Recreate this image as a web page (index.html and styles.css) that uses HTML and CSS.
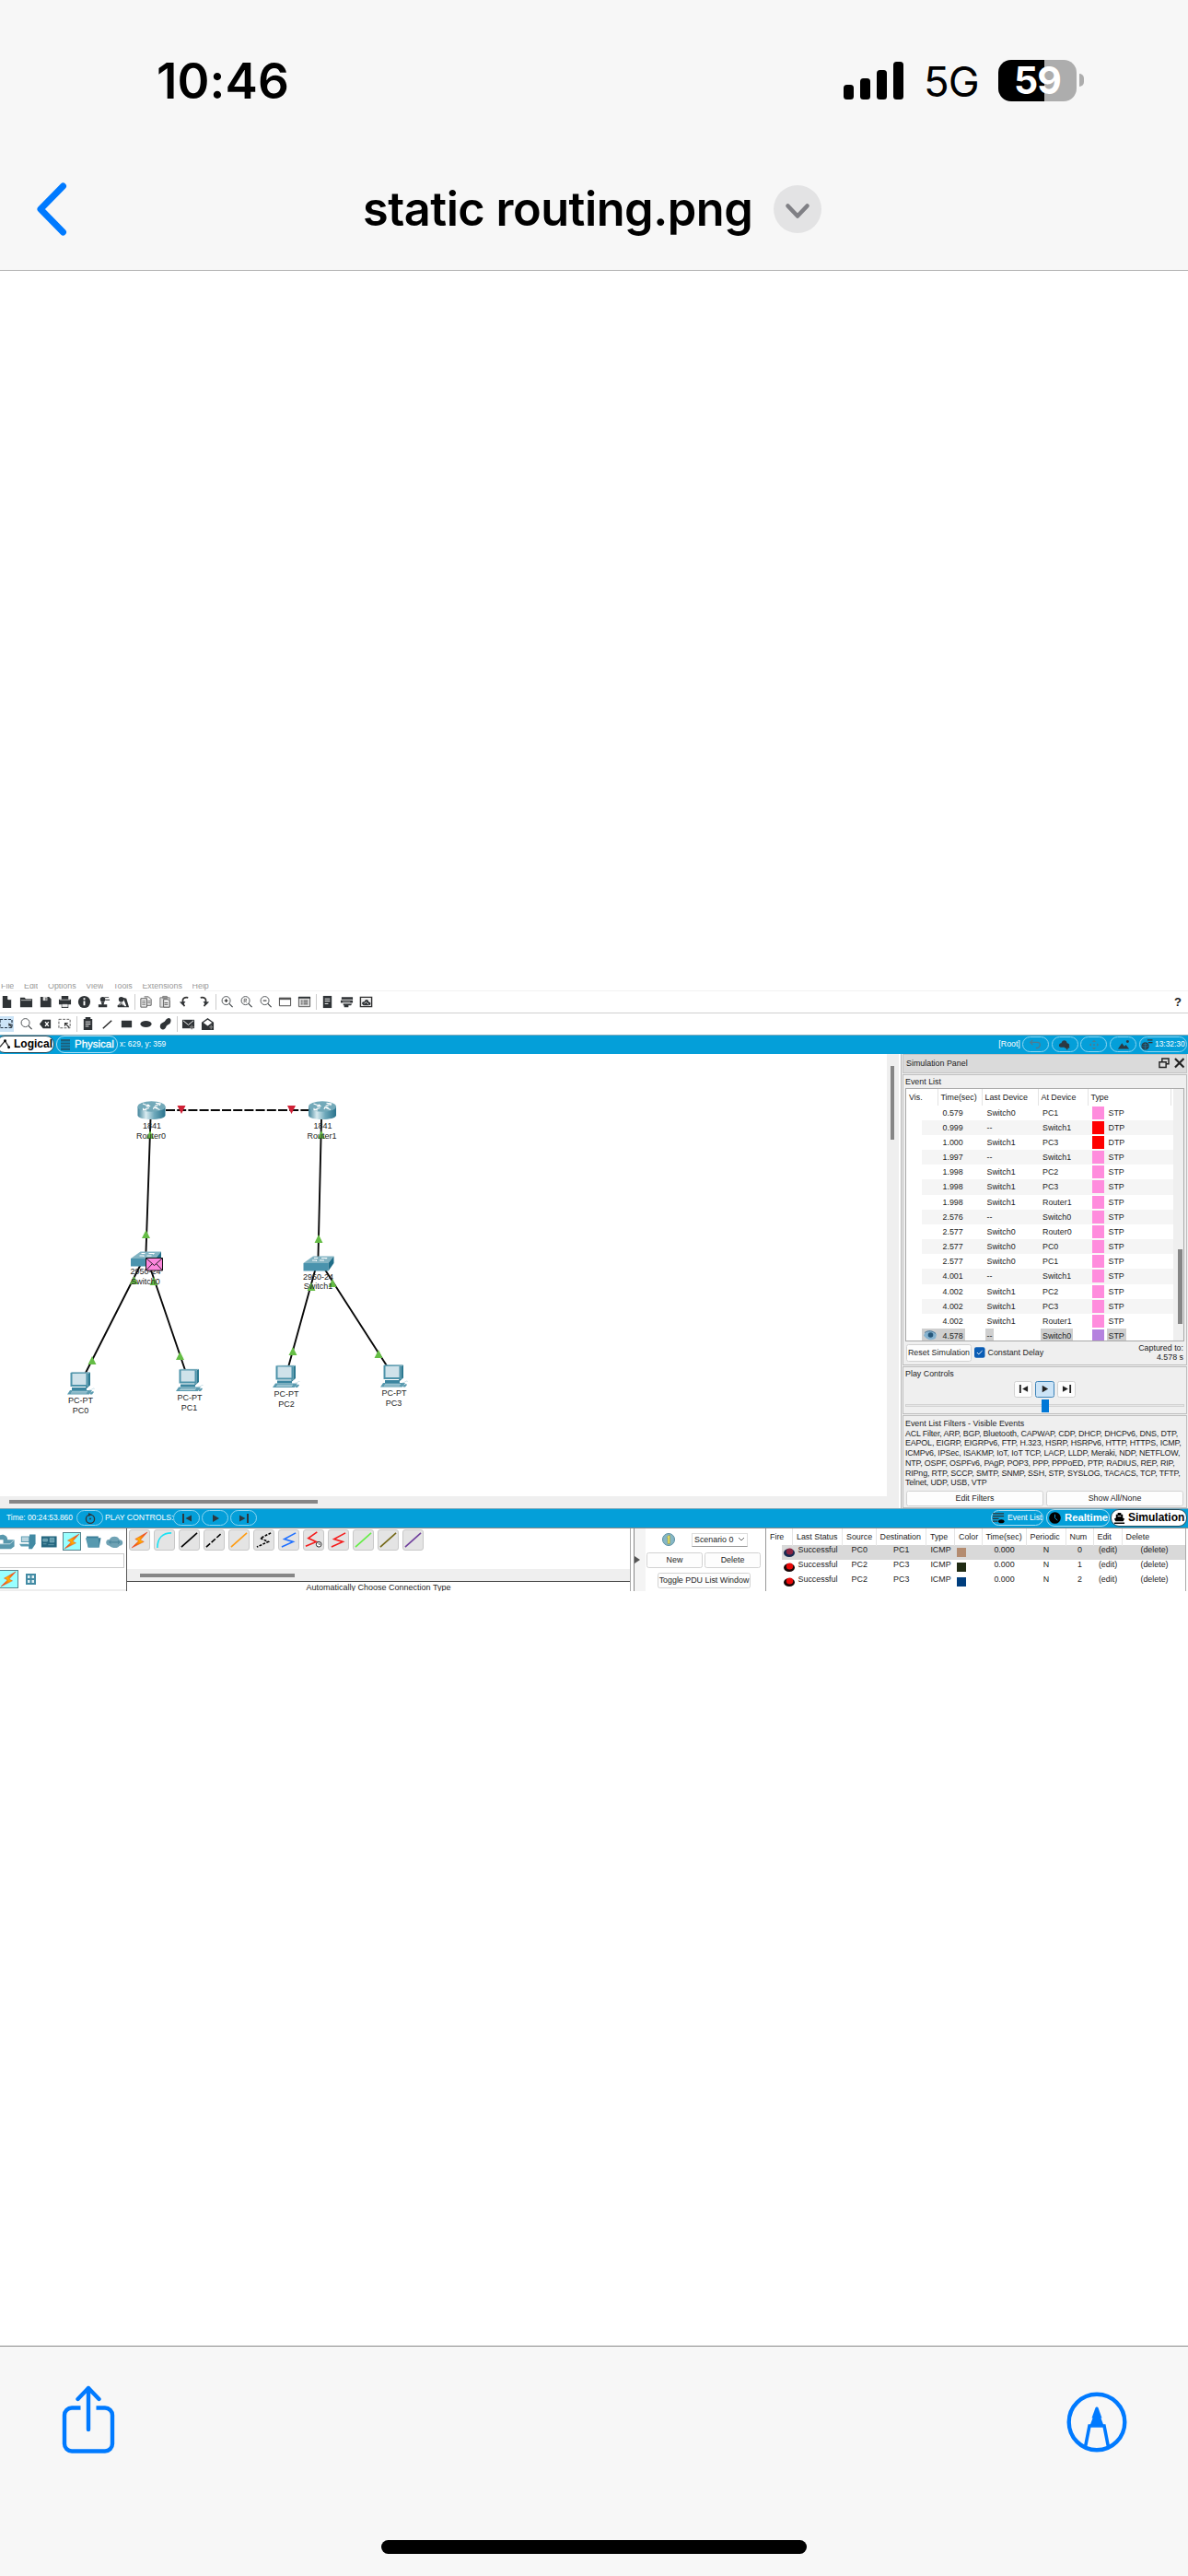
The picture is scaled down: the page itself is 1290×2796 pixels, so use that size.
FILE: index.html
```html
<!DOCTYPE html>
<html lang="en">
<head>
<meta charset="utf-8">
<title>static routing.png</title>
<link rel="stylesheet" href="styles.css">
</head>
<body>
<svg class="defs" aria-hidden="true">
  <defs>
    <linearGradient id="metal"><stop offset="0" stop-color="#3f8299"/><stop offset=".3" stop-color="#d8ebf0"/><stop offset=".6" stop-color="#6fa9bb"/><stop offset="1" stop-color="#28728c"/></linearGradient>
    <linearGradient id="fire" x1="0" y1="1" x2="1" y2="0"><stop offset="0" stop-color="#f01818"/><stop offset=".5" stop-color="#ffb000"/><stop offset="1" stop-color="#f01818"/></linearGradient>
    <symbol id="bolt" viewBox="0 0 20 20"><path d="M19 1 5 9l4 2-8 8 14-7-4-2z" fill="url(#fire)" stroke="#e8471c" stroke-width=".5"/></symbol>
    <symbol id="prev" viewBox="0 0 12 12"><path d="M1 1h2v10H1zM11 2.500v7L4.500 6z"/></symbol>
    <symbol id="play" viewBox="0 0 12 12"><path d="M3 2v8l7-4z"/></symbol>
    <symbol id="next" viewBox="0 0 12 12"><path d="M9 1h2v10H9zM1 2.500v7L7.500 6z"/></symbol>
    <symbol id="router" viewBox="0 0 31 21"><path d="M.5 6v9.500c0 6 30 6 30 0V6z" fill="url(#metal)"/><ellipse cx="15.500" cy="6" rx="15" ry="5.700" fill="#73a9b9"/><path d="M6 3l7 2.500M9.500 6.200l4-.6-2-2M25 3l-6 2.500M20 2.400l5.200.5-1 2M13 7.500 7 9.600M6.500 7.800l0 2 4 .2M18.500 7l6 2.400M17.500 9l.8-2.200 4 .2" stroke="#fff" stroke-width="1.100" fill="none"/></symbol>
    <symbol id="switch" viewBox="0 0 34 17"><path d="M.5 8h27v8.500H.5z" fill="#4a93ad"/><path d="M.5 8 11 .5h22.500l-6 7.500z" fill="#83b4c3"/><path d="M33.500.5v7.500l-6 8.500V8z" fill="#1f6d88"/><path d="M10 5h5l-1 1M23 5h-5M16 2.500h-4M20 2.500h6l-1 1" stroke="#fff" fill="none"/></symbol>
    <symbol id="pc" viewBox="0 0 30 25"><path d="M3.500 1h19v15h-19z" fill="#4d93aa"/><path d="m22.500 2 2.500-1.500v14L21 18l-1-2h2.500z" fill="#2b7890"/><path d="M5.500 2h15v12h-15z" fill="#cfe2ea"/><path d="M3.500 1 5 .3h20L22.500 2z" fill="#73a9ba"/><path d="M5 17h16v3H5z" fill="#3c86a0"/><path d="m3 20-3 4.500h24l3-4.500zM25 22.500l3-1.500 1 1-2 2.500h-2z" fill="#5b9bb0"/><path d="M5 21.700h17M4 23h17M24 19.500c2 1 5-3 5.500-1" stroke="#bdd8e1" fill="none" stroke-width=".8"/></symbol>
    <symbol id="mag" viewBox="0 0 16 16"><circle cx="7" cy="6.500" r="4.800" fill="none" stroke="#4b4f52"/><path d="m10.500 10 4 4" stroke="#3d4144" stroke-width="1.300"/></symbol>
  </defs>
</svg>

<header class="top">
  <div class="status">
    <div class="clock">10:46</div>
    <div class="signal"><i></i><i></i><i></i><i></i></div>
    <div class="network">5G</div>
    <div class="battery">59</div><div class="nub"></div>
  </div>
  <div class="nav">
    <svg class="back" viewBox="0 0 40 64"><path d="M32.500 7 8 32l24.500 25" fill="none" stroke="#007aff" stroke-width="7" stroke-linecap="round" stroke-linejoin="round"/></svg>
    <h1>static routing.png</h1>
    <svg class="more" viewBox="0 0 52 52"><circle cx="26" cy="26" r="26" fill="#e3e3e4"/><path d="m15.500 22.500 10.500 11 10.500-11" fill="none" stroke="#808085" stroke-width="4.600" stroke-linecap="round" stroke-linejoin="round"/></svg>
  </div>
</header>

<main class="photo">
  <nav class="menu"><span>File</span><span>Edit</span><span>Options</span><span>View</span><span>Tools</span><span>Extensions</span><span>Help</span></nav>

  <div class="tools first">
    <svg viewBox="0 0 16 16"><path d="M3 1h6l4 4v10H3zM9 1v4h4" /><path d="M9.500 1v4H13" stroke="#fff" fill="none"/></svg>
    <svg viewBox="0 0 16 16"><path d="M1 3h5l1.500 1.500H15V14H1z"/><path d="M2 6h12" stroke="#ddd" stroke-width=".8"/></svg>
    <svg viewBox="0 0 16 16"><path d="M2 2h10l2.500 2.500V14H2z"/><path d="M5 2h5v4.500H5z" fill="#ddd"/><path d="M8 3h1v3H8z"/></svg>
    <svg viewBox="0 0 16 16"><path d="M4 1h8v4h3v6h-3v4H4v-4H1V5h3z"/><path d="M2 5.500h12M5 11h6v2.500H5z" stroke="#eee" fill="#eee" stroke-width=".7"/></svg>
    <svg viewBox="0 0 16 16"><circle cx="8" cy="8" r="7"/><path d="M7 7h2v5H7zM7 3.500h2v2H7z" fill="#fff"/></svg>
    <svg viewBox="0 0 16 16"><circle cx="7" cy="5" r="3"/><path d="M5 8h4l-1 3h4v3H2v-3h4zM9 2h5v1H9zM10 5h5v1h-5z"/></svg>
    <svg viewBox="0 0 16 16"><circle cx="6" cy="5" r="3"/><path d="m6 8 4 5H1zM8 3l4 1 3 10H2v-1h10z"/><path d="m4 12 2-3 2 3" stroke="#ddd" fill="none"/></svg>
    <b></b>
    <svg viewBox="0 0 16 16"><path d="M2 4h7v10H2zM6 2h5l3 3v7H9" fill="#eee" stroke="#555"/><path d="M3.500 7h4M3.500 9h4M3.500 11h4M10 7h3M10 9h3" stroke="#555" stroke-width=".8"/></svg>
    <svg viewBox="0 0 16 16"><path d="M2 3h11v11H2zM5 1.500h5v2H5z" fill="#ddd" stroke="#777"/><path d="M6 5h5l2 2v7H6z" fill="#eee" stroke="#555"/><path d="M7 9h4M7 11h4" stroke="#555"/></svg>
    <svg viewBox="0 0 16 16"><path d="M12 3C8 2 5 4 6 8c.3 3 1 4 2 5" fill="none" stroke="#333" stroke-width="1.800"/><path d="m2 8 7-.5L6 12z"/></svg>
    <svg viewBox="0 0 16 16"><path d="M4 3c4-1 7 1 6 5-.3 3-1 4-2 5" fill="none" stroke="#333" stroke-width="1.800"/><path d="m14 8-7-.5 3 4.500z"/></svg>
    <b></b>
    <svg viewBox="0 0 16 16"><use href="#mag"/><path d="M5 6.500h4M7 4.500v4" stroke="#333" stroke-width="1.200"/></svg>
    <svg viewBox="0 0 16 16"><use href="#mag"/><path d="M5.500 9V4.500H8v2H6l2.500 2.300" fill="none" stroke="#555" stroke-width=".8"/></svg>
    <svg viewBox="0 0 16 16"><use href="#mag"/><path d="M5 6.500h4" stroke="#333" stroke-width="1.200"/></svg>
    <svg viewBox="0 0 16 16"><path d="M1.500 3.500h13v9h-13z" fill="none" stroke="#444"/><path d="M1 3h14v2.500H1z" fill="#555"/></svg>
    <svg viewBox="0 0 16 16"><path d="M1.500 2.500h13v11h-13z" fill="#ddd" stroke="#555"/><path d="M1 2h14v2H1z"/><path d="M7 6.500h5M7 8.500h5M7 10.500h5M4 6.500h2M4 8.500h2M4 10.500h2" stroke="#444"/></svg>
    <b></b>
    <svg viewBox="0 0 16 16"><path d="M3 1h10v14H3z"/><path d="M5 4.500h6M5 7h6M5 10h4" stroke="#fff"/></svg>
    <svg viewBox="0 0 16 16"><path d="M2 2.500h13v2.700H2zM1 6h14v3H1zM4 10h10l-1 2H4zM5 12h5v2H5z"/><path d="M2 5.500h12M3 8h9" stroke="#ccc" stroke-width=".7"/></svg>
    <svg viewBox="0 0 16 16"><path d="M1.500 2.500h13v11h-13z" fill="#eee" stroke="#333" stroke-width="1.500"/><path d="M4 11c-2-2 1-4 2-3 1-4 5-3 5 0 3 0 3 4 0 4H5z"/><path d="m6 10 2-2 3 3" fill="none" stroke="#ddd"/></svg>
    <span class="help">?</span>
  </div>

  <div class="tools second">
    <svg class="picked" viewBox="0 0 16 16"><path d="M1 3h13v9H1z" fill="none" stroke="#234" stroke-dasharray="3 1.500" stroke-width="1.200"/><path d="m10 7 4 1.500-1.500.8 2 2.500-1 .5-1.800-2.500-1 1z"/></svg>
    <svg viewBox="0 0 16 16"><use href="#mag"/></svg>
    <svg viewBox="0 0 16 16"><path d="m1 8 4-5h9v10H5z"/><path d="m7.500 5.500 4 5m0-5-4 5" stroke="#fff" stroke-width="1.500"/></svg>
    <svg viewBox="0 0 16 16"><path d="M1 2.500h13v10H1z" fill="none" stroke="#555" stroke-dasharray="3 1.500"/><path d="M8 7l5 5M8 10.500V7h3.500" fill="none" stroke="#333" stroke-width="1.200"/></svg>
    <b></b>
    <svg viewBox="0 0 16 16"><path d="M3 2h10v13H3zM5 0h6v3H5z"/><path d="M5 5.500h6M5 8h6M5 10.500h4" stroke="#fff"/></svg>
    <svg viewBox="0 0 16 16"><path d="m3 13 10-9" stroke="#222" stroke-width="1.500"/></svg>
    <svg viewBox="0 0 16 16"><path d="M2 4h12v8H2z"/></svg>
    <svg viewBox="0 0 16 16"><ellipse cx="8" cy="8" rx="6.500" ry="3.700"/></svg>
    <svg viewBox="0 0 16 16"><path d="M8 4c3-5 8-3 6 2-1 3-4 2-5 5-1 5-8 4-7-1 .6-4 4-3 6-6"/></svg>
    <b></b>
    <svg viewBox="0 0 16 16"><path d="M1 3h14v10H1z"/><path d="m2 4 6 5 6-5" stroke="#fff" fill="none"/><path d="M12 9v5M9.500 11.500h5" stroke="#777" stroke-width="1.500"/></svg>
    <svg viewBox="0 0 16 16"><path d="m1 6 7-5 7 5v9H1z"/><path d="M3 6.500 8 3l5 3.500L8 10z" fill="#fff"/><path d="M12 9v5M10 11.500h4" stroke="#777" stroke-width="1.500"/></svg>
  </div>

  <div class="bar views">
    <div class="tab active logical"><svg viewBox="0 0 12 12"><path d="m0 9 6-7 5 8" fill="none" stroke="#333" stroke-width="1.300"/><circle cx="6" cy="2" r="1.600"/><circle cx="10.500" cy="9.500" r="1.600"/></svg>Logical</div>
    <div class="tab physical"><svg viewBox="0 0 10 12"><path d="M0 0h10v12H0z" fill="#1b5d78"/><path d="M0 3h10M0 6h10M0 9h10" stroke="#0ba0da"/></svg>Physical</div>
    <span class="coords">x: 629, y: 359</span>
    <span class="root">[Root]</span>
    <div class="pill"><svg viewBox="0 0 16 12"><path d="M2 3h9c4 0 4 6 0 7H9M5 0 2 3l3 3" fill="none" stroke="#4d7c92" stroke-width="1.500"/></svg></div>
    <div class="pill"><svg viewBox="0 0 16 12"><path d="M3 9c-4-1-1-6 1-5 1-5 7-4 7 0 4 0 4 5 0 5z"/><path d="M11 5v7M8 9h6" stroke="#333" stroke-width="1.800"/></svg></div>
    <div class="pill"><svg viewBox="0 0 16 12" fill="#4d7c92"><path d="m8 0 2.500 2.500h-5zM8 12l2.500-2.500h-5zM2 6l2.500-2v4zM14 6l-2.500-2v4zM7 5h2v2H7z"/></svg></div>
    <div class="pill"><svg viewBox="0 0 16 12"><path d="m1 11 5-7 3 4 2-2 4 5z"/><circle cx="13" cy="2" r="1.700"/></svg></div>
    <div class="pill time"><svg viewBox="0 0 14 13"><circle cx="5.500" cy="8" r="4.500"/><path d="M1 8h9M5.500 4v8M3 6h5M3 10h5" stroke="#1887b5" stroke-width=".6"/><path d="M8 1h6M9 4h5" stroke="#333" stroke-width="1.300"/></svg>13:32:30</div>
  </div>

  <div class="work">
    <section class="canvas">
      <svg class="topology" viewBox="0 0 962 480">
        <g stroke="#080808" stroke-width="1.900">
          <path d="M180 61h155" stroke-dasharray="10 2.200" stroke-width="2"/>
          <path d="M163.500 70 158.500 215M349 70l-3.500 150M154 226 92 348M161 226l41 120M344 228l-31 112M349 228l72 112"/>
        </g>
        <g fill="#65bd45">
          <path d="M158.500 191l4.500 9h-9zM346 196l4.500 9h-9zM100 328l4.500 9h-9zM195.500 323l4.500 9h-9zM318 318l4.500 9h-9zM411 321l4.500 9h-9zM163 83l4 9h-8zM349 83l4 9h-8zM145.500 241l4.500 9h-9zM167 242l4.500 9h-9zM338 248l4.500 9h-9zM361 244l4.500 9h-9z"/>
        </g>
        <path d="M192.500 56h9l-4.500 9zM312 56h9l-4.500 9z" fill="#cf2136"/>
        <use href="#router" x="149" y="51" width="31" height="21"/>
        <use href="#router" x="334.500" y="51" width="31" height="21"/>
        <use href="#switch" x="141.500" y="214" width="34" height="17"/>
        <use href="#switch" x="329" y="219" width="34" height="17"/>
        <use href="#pc" x="73" y="345" width="30" height="25"/>
        <use href="#pc" x="191" y="341.500" width="30" height="25"/>
        <use href="#pc" x="296" y="337.500" width="30" height="25"/>
        <use href="#pc" x="413" y="337" width="30" height="25"/>
        <g class="labels">
          <text x="165" y="81">1841</text><text x="164" y="92">Router0</text>
          <text x="350.500" y="81">1841</text><text x="349.500" y="92">Router1</text>
          <text x="158" y="239">2950-24</text><text x="158" y="250">Switch0</text>
          <text x="345.500" y="244.500">2950-24</text><text x="345.500" y="255">Switch1</text>
          <text x="87.500" y="379">PC-PT</text><text x="87.500" y="390">PC0</text>
          <text x="206" y="376">PC-PT</text><text x="205.500" y="386.500">PC1</text>
          <text x="311" y="372">PC-PT</text><text x="311" y="382.500">PC2</text>
          <text x="428" y="371">PC-PT</text><text x="427.500" y="382">PC3</text>
        </g>
        <path d="M158.500 221.500h18v13.500h-18z" fill="#fc86dc" stroke="#111"/><path d="m158.500 221.500 9 8 9-8M158.500 235l6.500-7M176.500 235l-6.500-7" fill="none" stroke="#111" stroke-width=".9"/>
      </svg>
      <div class="hscroll"><i></i></div>
    </section>
    <div class="vscroll"><i></i></div>

    <aside class="panel">
      <div class="ptitle"><span>Simulation Panel</span>
        <svg viewBox="0 0 12 12"><path d="M4 1h7.500v6H4z" fill="none" stroke="#222" stroke-width="1.500"/><path d="M1 5h7.500v6H1z" fill="#ddd" stroke="#222" stroke-width="1.500"/></svg>
        <svg viewBox="0 0 12 12"><path d="m1 1 10 10M11 1 1 11" stroke="#222" stroke-width="2.300"/></svg>
      </div>
      <div class="group events">
        <div class="label">Event List</div>
        <div class="table">
          <div class="erows">
            <div class="ehead"><span>Vis.</span><span>Time(sec)</span><span>Last Device</span><span>At Device</span><span>Type</span></div>
            <div class="er"><span></span><span>0.579</span><span>Switch0</span><span>PC1</span><i></i><span>STP</span></div>
            <div class="er"><span></span><span>0.999</span><span>--</span><span>Switch1</span><i class="dtp"></i><span>DTP</span></div>
            <div class="er"><span></span><span>1.000</span><span>Switch1</span><span>PC3</span><i class="dtp"></i><span>DTP</span></div>
            <div class="er"><span></span><span>1.997</span><span>--</span><span>Switch1</span><i></i><span>STP</span></div>
            <div class="er"><span></span><span>1.998</span><span>Switch1</span><span>PC2</span><i></i><span>STP</span></div>
            <div class="er"><span></span><span>1.998</span><span>Switch1</span><span>PC3</span><i></i><span>STP</span></div>
            <div class="er"><span></span><span>1.998</span><span>Switch1</span><span>Router1</span><i></i><span>STP</span></div>
            <div class="er"><span></span><span>2.576</span><span>--</span><span>Switch0</span><i></i><span>STP</span></div>
            <div class="er"><span></span><span>2.577</span><span>Switch0</span><span>Router0</span><i></i><span>STP</span></div>
            <div class="er"><span></span><span>2.577</span><span>Switch0</span><span>PC0</span><i></i><span>STP</span></div>
            <div class="er"><span></span><span>2.577</span><span>Switch0</span><span>PC1</span><i></i><span>STP</span></div>
            <div class="er"><span></span><span>4.001</span><span>--</span><span>Switch1</span><i></i><span>STP</span></div>
            <div class="er"><span></span><span>4.002</span><span>Switch1</span><span>PC2</span><i></i><span>STP</span></div>
            <div class="er"><span></span><span>4.002</span><span>Switch1</span><span>PC3</span><i></i><span>STP</span></div>
            <div class="er"><span></span><span>4.002</span><span>Switch1</span><span>Router1</span><i></i><span>STP</span></div>
            <div class="er current"><span class="eye"><svg viewBox="0 0 14 10"><path d="M0 5c2-6 11-6 14-1l-1 4c-4 3-10 2-13-3z" fill="#86b3d0"/><circle cx="7.500" cy="4.500" r="2.800" fill="#26577a"/><path d="M1 2c4-3 9-2 12 1" stroke="#3f6f92" fill="none"/></svg></span><span class="stamp"><em>4.578</em></span><span><em>--</em></span><span><em>Switch0</em></span><i class="sel"></i><span><em>STP</em></span></div>
          </div>
          <div class="escroll"><i></i></div>
        </div>
        <div class="erow-foot"><button class="reset">Reset Simulation</button><svg class="check" viewBox="0 0 12 12"><rect width="12" height="12" rx="2" fill="#0a5cb4"/><path d="m3 6 2 2 4-4" fill="none" stroke="#fff"/></svg><span>Constant Delay</span><div class="captured">Captured to:<br>4.578 s</div></div>
      </div>
      <div class="group controls">
        <div class="label">Play Controls</div>
        <div class="buttons"><button><svg><use href="#prev"/></svg></button><button class="on"><svg><use href="#play"/></svg></button><button><svg><use href="#next"/></svg></button></div>
        <div class="slider"><i></i></div>
      </div>
      <div class="group filters">
        <div class="label">Event List Filters - Visible Events</div>
        <p>ACL Filter, ARP, BGP, Bluetooth, CAPWAP, CDP, DHCP, DHCPv6, DNS, DTP,<br>EAPOL, EIGRP, EIGRPv6, FTP, H.323, HSRP, HSRPv6, HTTP, HTTPS, ICMP,<br>ICMPv6, IPSec, ISAKMP, IoT, IoT TCP, LACP, LLDP, Meraki, NDP, NETFLOW,<br>NTP, OSPF, OSPFv6, PAgP, POP3, PPP, PPPoED, PTP, RADIUS, REP, RIP,<br>RIPng, RTP, SCCP, SMTP, SNMP, SSH, STP, SYSLOG, TACACS, TCP, TFTP,<br>Telnet, UDP, USB, VTP</p>
        <div class="pair"><button>Edit Filters</button><button>Show All/None</button></div>
      </div>
    </aside>
  </div>

  <div class="bar play">
    <span class="elapsed">Time: 00:24:53.860</span>
    <div class="pill"><svg viewBox="0 0 12 12"><circle cx="6" cy="6.700" r="4.600" fill="none" stroke="#333" stroke-width="1.300"/><circle cx="6" cy="6.500" r="1"/><path d="m4 0 4 2-4 2z"/></svg></div>
    <span class="pc-label">PLAY CONTROLS:</span>
    <div class="pill"><svg><use href="#prev"/></svg></div>
    <div class="pill"><svg><use href="#play"/></svg></div>
    <div class="pill"><svg><use href="#next"/></svg></div>
    <div class="tab evlist"><svg viewBox="0 0 14 14"><path d="M0 2h13M0 5h13M0 8h7M0 11h6" stroke="#333" stroke-width="1.300"/><ellipse cx="10" cy="11" rx="3.500" ry="2.200"/></svg>Event List</div>
    <div class="tab realtime"><svg viewBox="0 0 14 14"><circle cx="7" cy="7" r="6.800"/><path d="M7 3v4l3 3" stroke="#0b9ad2" fill="none"/></svg>Realtime</div>
    <div class="tab active simulation"><svg viewBox="0 0 14 14"><path d="M5 1h4v2h2v4l2 1-1.500 3h-9L1 8l2-1V3h2zM1 12.500h12V14H1z"/><path d="M5 5h4" stroke="#fff"/></svg>Simulation</div>
  </div>

  <div class="dock">
    <section class="devices">
      <div class="kinds">
        <svg viewBox="0 0 20 18"><path d="M0 3c5-4 11-1 11 4h8v8l-4 3H1v-6h5V7H0z" fill="#5998ad"/><path d="M1 12h13l5-5" stroke="#c5dde5" fill="none"/></svg>
        <svg viewBox="0 0 20 18"><path d="M2 3h10v7H2zM0 12h10l3 3H2z" fill="#5c9cb1"/><path d="M12 1h7v11l-4 6h-4v-5z" fill="#428aa3"/><path d="M3 4h8v5H3z" fill="#bad5df"/></svg>
        <svg viewBox="0 0 20 18"><path d="M1 3h18v13H1z" fill="#24667f"/><path d="M3 6h5v3H3zM11 5h5v5h-5zM3 12h4M9 13h7" fill="#629cae" stroke="#8bb9c6" stroke-width=".7"/></svg>
        <div class="cell"><svg><use href="#bolt"/></svg></div>
        <svg viewBox="0 0 20 18"><path d="M2 3h14v2h3l-2 11H4z" fill="#3a7d97"/><path d="M1 5h15l1 11H4z" fill="#5799af"/></svg>
        <svg viewBox="0 0 20 18"><path d="M4 14c-6-1-4-8 0-7 2-5 10-5 12 0 5 0 5 7 0 7-2 4-9 3-12 0z" fill="#6fa2b4"/><path d="m6 8-2 2 2 2M14 8l2 2-2 2M4 10h12" stroke="#3f7d94" fill="none"/></svg>
      </div>
      <div class="caption"></div>
      <div class="subkinds"><div class="cell"><svg><use href="#bolt"/></svg></div><svg class="grid4" viewBox="0 0 11 12"><path d="M0 0h11v12H0z" fill="#438ba4"/><path d="M2 2h2.500v3H2zM6.500 2H9v3H6.500zM2 7h2.500v3H2zM6.500 7H9v3H6.500z" fill="#e1f0f4"/></svg></div>
    </section>
    <section class="cables">
      <div class="cable-row">
        <div><svg><use href="#bolt"/></svg></div>
        <div><svg viewBox="0 0 20 20"><path d="M2 19C2 8 8 2 18 2" stroke="#19e2f4"/></svg></div>
        <div><svg viewBox="0 0 20 20"><path d="M1 18 19 2" stroke="#000"/></svg></div>
        <div><svg viewBox="0 0 20 20"><path d="M1 18 19 2" stroke="#000" stroke-dasharray="6 2"/></svg></div>
        <div><svg viewBox="0 0 20 20"><path d="M1 18 19 2" stroke="#ff9c12"/></svg></div>
        <div><svg viewBox="0 0 20 20"><path d="M18 2 6 8l9 4L2 18" stroke="#000" stroke-dasharray="3 1.500"/></svg></div>
        <div><svg viewBox="0 0 20 20"><path d="M18 2 5 9l10 3L2 18" stroke="#1f70ff"/></svg></div>
        <div><svg viewBox="0 0 20 20"><path d="M14 1 4 8l9 4L1 17" stroke="#f41c1c"/><circle cx="16" cy="15" r="3" stroke="#222" stroke-width="1" fill="#fff"/><path d="M16 13v2h2" stroke="#222" stroke-width=".7"/></svg></div>
        <div><svg viewBox="0 0 20 20"><path d="M18 2 5 9l10 3L2 18" stroke="#f41c1c"/></svg></div>
        <div><svg viewBox="0 0 20 20"><path d="M1 18 19 2" stroke="#64ed45"/></svg></div>
        <div><svg viewBox="0 0 20 20"><path d="M1 18 19 2" stroke="#746817"/></svg></div>
        <div><svg viewBox="0 0 20 20"><path d="M1 18 19 2" stroke="#70409d"/></svg></div>
      </div>
      <div class="cscroll"><i></i></div>
      <div class="hint">Automatically Choose Connection Type</div>
    </section>
    <div class="split"><svg viewBox="0 0 6 8"><path d="m0 0 6 4-6 4z" fill="#555"/></svg></div>
    <section class="scenario">
      <div class="pick"><svg viewBox="0 0 14 14"><circle cx="7" cy="7" r="6.500" fill="#86b7c5" stroke="#5a8fa1"/><path d="M5 4.500 7 2.500h1.500v9H6V5z" fill="#e4df62" stroke="#8a8b42" stroke-width=".5"/></svg><div class="combo">Scenario 0<svg viewBox="0 0 8 6"><path d="m1 1 3 3 3-3" fill="none" stroke="#666"/></svg></div></div>
      <div class="two"><button>New</button><button>Delete</button></div>
      <button class="toggle">Toggle PDU List Window</button>
    </section>
    <section class="pdu">
      <div class="prow phead"><span>Fire</span><span>Last Status</span><span>Source</span><span>Destination</span><span>Type</span><span>Color</span><span>Time(sec)</span><span>Periodic</span><span>Num</span><span>Edit</span><span>Delete</span></div>
      <div class="prow chosen"><span><svg viewBox="0 0 12 10"><ellipse cx="6" cy="5.500" rx="6" ry="4.500" fill="#182a50"/><ellipse cx="6.500" cy="4" rx="3.700" ry="3.500" fill="#8c2442"/></svg></span><span>Successful</span><span>PC0</span><span>PC1</span><span>ICMP</span><span><i class="tan"></i></span><span>0.000</span><span>N</span><span>0</span><span>(edit)</span><span>(delete)</span></div>
      <div class="prow"><span><svg viewBox="0 0 12 10"><ellipse cx="6" cy="5.500" rx="6" ry="4.500" fill="#190606"/><ellipse cx="6.500" cy="4" rx="3.700" ry="3.500" fill="#e90909"/></svg></span><span>Successful</span><span>PC2</span><span>PC3</span><span>ICMP</span><span><i class="olive"></i></span><span>0.000</span><span>N</span><span>1</span><span>(edit)</span><span>(delete)</span></div>
      <div class="prow"><span><svg viewBox="0 0 12 10"><ellipse cx="6" cy="5.500" rx="6" ry="4.500" fill="#190606"/><ellipse cx="6.500" cy="4" rx="3.700" ry="3.500" fill="#e90909"/></svg></span><span>Successful</span><span>PC2</span><span>PC3</span><span>ICMP</span><span><i class="navy"></i></span><span>0.000</span><span>N</span><span>2</span><span>(edit)</span><span>(delete)</span></div>
    </section>
  </div>
</main>

<footer class="bottom">
  <div class="actions">
    <svg class="share" viewBox="0 0 58 76"><g fill="none" stroke="#007aff" stroke-width="4.400" stroke-linecap="round" stroke-linejoin="round"><path d="M20.500 24.500H11a8 8 0 0 0-8 8v31a8 8 0 0 0 8 8h36a8 8 0 0 0 8-8v-31a8 8 0 0 0-8-8H37.500" stroke-linecap="butt"/><path d="M29 48V3M17.500 15 29 3l11.500 12"/></g></svg>
    <svg class="markup" viewBox="0 0 66 66"><circle cx="33" cy="33" r="30.300" fill="none" stroke="#007aff" stroke-width="4.400"/><path d="M33 16.500 25 38h16z" fill="#007aff"/><path d="m20.500 60 4.500-23h16l4.500 23" fill="none" stroke="#007aff" stroke-width="3.600"/><path d="M31.500 17.500a1.600 1.600 0 0 1 3 0l4 11h-11z" fill="#007aff"/></svg>
  </div>
  <div class="home"></div>
</footer>
</body>
</html>
```
FILE: styles.css
```css
* { box-sizing: border-box; }
body { margin: 0; width: 1290px; height: 2796px; background: #fff; display: flex; flex-direction: column; overflow: hidden; font-family: Inter, sans-serif; color: #000; }
svg { display: block; flex: none; }
.defs { position: absolute; width: 0; height: 0; }

/* Phone header */
.top { height: 294px; flex: none; background: #f7f7f7; border-bottom: 1px solid #b2b2b2; }
.status { height: 174px; padding-left: 170px; display: flex; align-items: center; }
.clock { width: 746px; font-size: 53px; font-weight: 600; letter-spacing: .1px; line-height: 60px; padding-top: 2px; }
.signal { width: 65px; height: 41px; display: flex; align-items: flex-end; justify-content: space-between; }
.signal i { width: 11px; border-radius: 3.500px; background: #000; height: 16px; }
.signal i:nth-child(2) { height: 23px; }
.signal i:nth-child(3) { height: 32px; }
.signal i:nth-child(4) { height: 41px; }
.network { margin-left: 22px; width: 81px; font-size: 45.500px; letter-spacing: -1px; line-height: 50px; padding-top: 4px; }
.battery { width: 85px; height: 45px; border-radius: 14px; background: linear-gradient(90deg, #000 50px, #adadad 50px); color: #fff; font-size: 41px; font-weight: 700; line-height: 45px; text-align: center; letter-spacing: -1px; }
.nub { width: 5px; height: 14px; margin-left: 3px; border-radius: 0 7px 7px 0; background: #adadad; }
.nav { height: 106px; display: flex; align-items: center; padding-left: 36px; }
.back { width: 40px; height: 64px; }
h1 { margin: 0 0 0 318px; width: 446px; font-size: 50.500px; font-weight: 600; letter-spacing: -.5px; line-height: 60px; white-space: nowrap; }
.more { width: 52px; height: 52px; }

/* Network simulator picture */
.photo { margin-top: 774px; height: 659px; width: 1290px; flex: none; overflow: hidden; font: 8.900px/11px "Liberation Sans", Arial, sans-serif; color: #1c1c1c; display: flex; flex-direction: column; }
.photo > * { flex: none; }
.menu { height: 8px; overflow: hidden; display: flex; color: #999; gap: 10.700px; padding-left: 1px; align-items: flex-end; border-bottom: 1px solid #f2f2f2; }
.menu span { height: 7px; line-height: 4px; overflow: hidden; white-space: nowrap; }
.tools { display: flex; align-items: center; padding-left: 0; height: 24px; }
.tools svg { width: 15px; height: 15px; margin-right: 6px; fill: #2f3336; }
.tools b { width: 1px; height: 17px; background: #ccc; margin: 0 4px 0 -1px; }
.first { border-bottom: 1px solid #d0d0d0; }
.second { height: 23px; }
.tools .picked { width: 16px; height: 17px; background: #cce4f7; margin: 0 6px 0 -1px; }
.help { margin-left: auto; margin-right: 7px; font-size: 13px; font-weight: 700; }
.bar { height: 20.500px; background: #049fd9; border-top: 1px solid #7fa9ba; display: flex; align-items: center; color: #fff; font-size: 8.400px; white-space: nowrap; }
.tab { height: 19px; border: 1px solid #a8def3; border-radius: 9px; display: flex; align-items: center; font-weight: 700; flex: none; }
.tab.active { background: #fff; color: #000; border-color: #214b5c; }
.logical { width: 63px; margin-left: -4px; padding-left: 3px; font-size: 12px; gap: 4px; }
.logical svg { width: 11px; height: 11px; }
.physical { width: 67px; margin-left: 2px; padding-left: 4px; font-size: 11.500px; font-weight: 400; -webkit-text-stroke: .3px #fff; gap: 5px; }
.physical svg { width: 10px; height: 12px; }
.coords { margin-left: 2px; }
.root { margin-left: auto; margin-right: 2px; font-size: 8.800px; }
.pill { width: 29px; height: 17px; border: 1px solid #8dd5f0; border-radius: 9px; display: flex; align-items: center; justify-content: center; fill: #2c3942; margin-right: 2.800px; flex: none; }
.pill svg { width: 14px; height: 12px; }
.pill.time { width: 52px; margin-right: 1px; font-size: 8.400px; justify-content: flex-start; gap: 2px; }

.work { height: 493.500px; display: flex; }
.canvas { width: 963px; display: flex; flex-direction: column; }
.topology { width: 962px; height: 480px; }
.labels { font-size: 9px; text-anchor: middle; fill: #222; }
.hscroll { height: 13.500px; background: #efefef; padding: 4.500px 0 0 10px; width: 976px; }
.hscroll i, .cscroll i { display: block; width: 335px; height: 4px; background: #868686; }
.vscroll { width: 13px; background: #efefef; padding: 13px 0 0 4px; }
.vscroll i { display: block; width: 4px; height: 80px; background: #868686; }
.panel { margin-left: 2px; width: 312px; border-left: 1px solid #b5b5b5; background: #efefef; display: flex; flex-direction: column; padding: 0 1px 0 1px; }
.ptitle { height: 21px; flex: none; background: #dadada; border: 1px solid #c4c4c4; display: flex; align-items: center; padding: 0 2px 0 3px; gap: 5px; }
.ptitle span { flex: 1; }
.ptitle svg { width: 11.500px; height: 11.500px; }
.group { border: 1px solid #bdbdbd; flex: none; padding: 0 2px; white-space: nowrap; }
.events { height: 316px; margin-top: 1px; }
.events .label { height: 14.500px; line-height: 15px; }
.table { height: 275px; border: 1px solid #a9a9a9; background: #fff; display: flex; overflow: hidden; }
.erows { width: 290px; }
.ehead { height: 17.500px; display: grid; grid-template-columns: 34.500px 48px 61px 54px 90px; line-height: 18px; }
.ehead span { padding-left: 3px; border-right: 1px solid #e3e3e3; }
.er { height: 16.180px; display: grid; grid-template-columns: 22.500px 48px 60.500px 54px 17.500px 70px; margin-left: 17px; line-height: 16.500px; }
.er:nth-child(odd) { background: #f5f5f5; }
.er i { width: 13px; height: 14px; margin-top: 1px; background: #ff8cdd; }
.er .dtp { background: #f00; }
.er .sel { background: #b582df; }
.current.er { background: #fff; }
.current em { font-style: normal; background: #cfcfcf; display: inline-block; padding: 0 2px; margin-left: -2px; }
.current .eye { background: #cfcfcf; padding: 2px; }
.eye svg { width: 14px; height: 11px; }
.escroll { flex: 1; background: #efefef; padding: 174px 0 0 5px; }
.escroll i { display: block; width: 4.500px; height: 81px; background: #868686; }
button { font: inherit; color: inherit; background: #fdfdfd; border: 1px solid #d2d2d2; border-radius: 2.500px; padding: 0; display: flex; align-items: center; justify-content: center; white-space: nowrap; }
.erow-foot { height: 24px; display: flex; align-items: center; }
.reset { width: 71px; height: 19px; margin-left: 1px; }
.check { width: 11.500px; height: 12px; margin: 0 3px; }
.captured { margin-left: auto; text-align: right; line-height: 10.500px; padding-right: 1px; }
.controls { height: 52px; margin-top: 1px; }
.controls .label { height: 15px; line-height: 15px; }
.buttons { display: flex; justify-content: center; gap: 3px; }
.buttons button { width: 20.500px; height: 18px; }
.buttons svg { width: 11px; height: 11px; fill: #222; }
.buttons .on { background: #cce4f7; border-color: #3c83b8; }
.slider { height: 3px; border: 1px solid #d3d3d3; margin-top: 7px; background: #e7e7e7; }
.slider i { display: block; width: 8px; height: 14px; margin: -6px auto 0; background: #0078d7; }
.filters { flex: 1; margin-top: 1px; }
.filters .label { height: 14px; line-height: 16px; }
.filters p { margin: 0; line-height: 10.800px; height: 67px; font-size: 8.900px; letter-spacing: -.14px; }
.pair { display: flex; gap: 3px; padding: 0 1px; }
.pair button { flex: 1; height: 17px; }

.elapsed { width: 76px; margin-left: 7px; }
.play .pill { margin-right: 2px; }
.play .pill svg { width: 12px; height: 12px; }
.pc-label { width: 74px; font-size: 8.700px; }
.evlist { margin-left: auto; width: 57px; height: 17px; font-weight: 400; font-size: 8.500px; padding-left: 1px; gap: 3px; }
.tab.evlist svg, .realtime svg, .simulation svg { width: 13px; height: 13px; }
.realtime { margin-left: 3px; width: 69px; font-size: 11.300px; gap: 4px; padding-left: 2px; }
.simulation { margin-left: 1px; width: 83px; font-size: 12px; gap: 3px; padding-left: 2px; margin-right: 1px; }

.dock { height: 70px; display: flex; border-top: 1px solid #888; background: #fff; }
.dock > section { flex: none; }
.devices { width: 137px; }
.kinds { height: 27px; display: flex; align-items: center; border-top: 2px solid #f2f2f2; margin-left: -2px; }
.kinds > svg { width: 18.500px; height: 18px; margin-right: 4.700px; }
.cell { width: 20.500px; height: 20px; background: #9ff; border: 1px solid #55828c; margin: 0 4px 0 0; flex: none; }
.cell svg { width: 18px; height: 18px; }
.caption { width: 135px; height: 16px; border: 1px solid #ccc; border-left: 0; }
.subkinds { display: flex; align-items: center; margin: 1px 0 0 -1px; gap: 4px; border-bottom: 3px solid #eee; height: 25px; }
.grid4 { width: 11px; height: 12px; }
.cables { width: 548px; border-left: 1px solid #555; border-right: 1px solid #aaa; }
.cable-row { height: 44px; display: flex; gap: 4.500px; padding: 1.500px 0 0 2px; }
.cable-row div { width: 22.500px; height: 22.500px; border: 1px solid #c8c8c8; border-radius: 3px; background: #e4e4e4; display: flex; align-items: center; justify-content: center; }
.cable-row svg { width: 19px; height: 19px; fill: none; stroke-width: 1.700; }
.cscroll { height: 13px; background: #efefef; padding: 5px 0 0 14px; }
.cscroll i { width: 168px; }
.hint { border-top: 1px solid #444; text-align: center; line-height: 12px; font-size: 9px; }
.split { width: 13px; flex: none; margin-left: 3px; border-left: 1px solid #888; background: #f4f4f4; display: flex; align-items: center; }
.split svg { width: 6px; height: 8px; }
.scenario { width: 130px; padding: 5px 3px 0 1px; }
.pick { display: flex; align-items: center; padding-left: 17px; gap: 18px; }
.pick > svg { width: 14px; height: 14px; }
.combo { width: 61px; height: 15px; border: 1px solid #ddd; border-bottom-color: #999; display: flex; align-items: center; padding-left: 2px; gap: 5px; }
.combo svg { width: 8px; height: 6px; }
.two { display: flex; gap: 2px; margin-top: 6px; }
.two button { width: 61px; height: 17px; }
.toggle { width: 101px; height: 17px; margin: 5px 0 0 12px; }
.pdu { width: 457px; border-left: 1px solid #999; border-right: 1px solid #aaa; }
.prow { height: 16.300px; display: grid; grid-template-columns: 29px 54px 36.500px 54.500px 31px 29.500px 48px 43px 30px 31px 70px; text-align: center; line-height: 11px; }
.prow > span { white-space: nowrap; }
.phead { height: 18px; line-height: 19px; text-align: left; }
.phead span { padding-left: 4px; border-right: 1px solid #e5e5e5; }
.phead span:last-child { border: 0; }
.chosen { background: linear-gradient(90deg, transparent 17px, #d9d9d9 17px); }
.prow svg { width: 12px; height: 10px; margin: 3px 0 0 19px; }
.prow i { display: block; width: 10px; height: 10px; margin: 3px 0 0 2px; }
.tan { background: #b48c70; }
.olive { background: #202b14; }
.navy { background: #003e7e; }

/* Phone toolbar */
.bottom { margin-top: auto; height: 250px; flex: none; border-top: 1px solid #8a8a8a; background: #f7f7f7; }
.actions { display: flex; justify-content: space-between; align-items: flex-start; padding: 42px 66px 0 67px; height: 210px; }
.share { width: 58px; height: 76px; }
.markup { width: 66px; height: 66px; margin-top: 7px; }
.home { width: 462px; height: 15px; border-radius: 8px; background: #000; margin: 0 auto; }
```
